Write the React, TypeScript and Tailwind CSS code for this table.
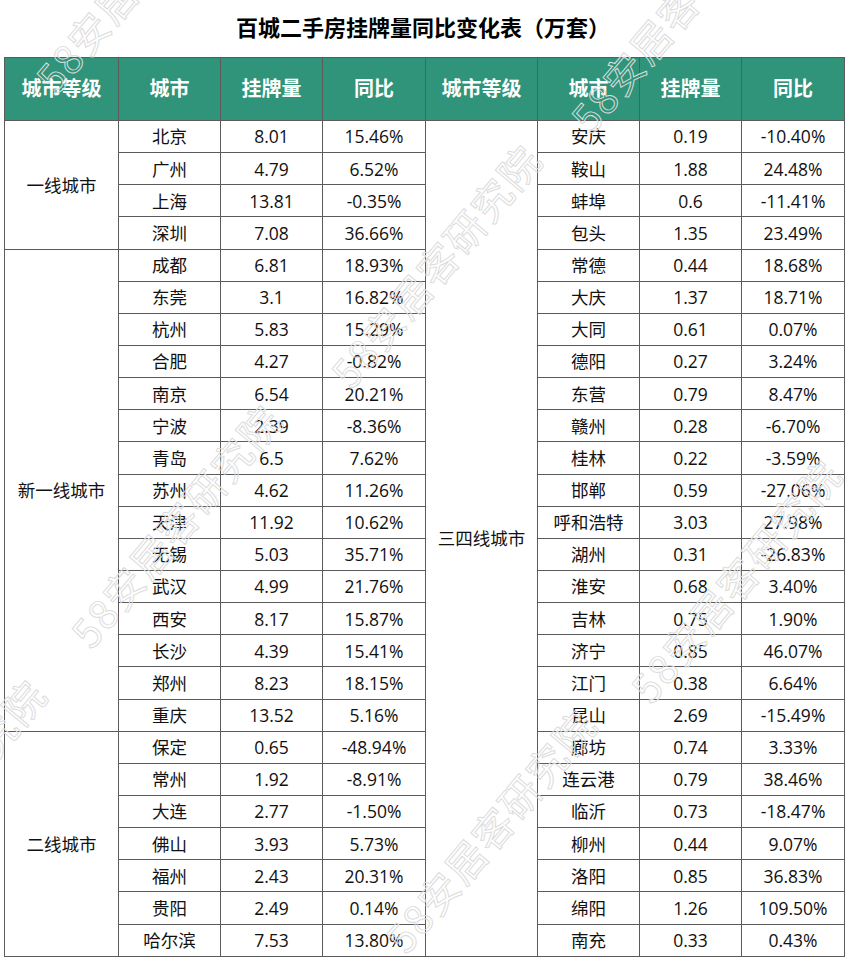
type Row = { city: string; count: string; yoy: string };

interface Group {
  tier: string;
  rows: Row[];
}

const leftGroups: Group[] = [
  {
    tier: "一线城市",
    rows: [
      { city: "北京", count: "8.01", yoy: "15.46%" },
      { city: "广州", count: "4.79", yoy: "6.52%" },
      { city: "上海", count: "13.81", yoy: "-0.35%" },
      { city: "深圳", count: "7.08", yoy: "36.66%" },
    ],
  },
  {
    tier: "新一线城市",
    rows: [
      { city: "成都", count: "6.81", yoy: "18.93%" },
      { city: "东莞", count: "3.1", yoy: "16.82%" },
      { city: "杭州", count: "5.83", yoy: "15.29%" },
      { city: "合肥", count: "4.27", yoy: "-0.82%" },
      { city: "南京", count: "6.54", yoy: "20.21%" },
      { city: "宁波", count: "2.39", yoy: "-8.36%" },
      { city: "青岛", count: "6.5", yoy: "7.62%" },
      { city: "苏州", count: "4.62", yoy: "11.26%" },
      { city: "天津", count: "11.92", yoy: "10.62%" },
      { city: "无锡", count: "5.03", yoy: "35.71%" },
      { city: "武汉", count: "4.99", yoy: "21.76%" },
      { city: "西安", count: "8.17", yoy: "15.87%" },
      { city: "长沙", count: "4.39", yoy: "15.41%" },
      { city: "郑州", count: "8.23", yoy: "18.15%" },
      { city: "重庆", count: "13.52", yoy: "5.16%" },
    ],
  },
  {
    tier: "二线城市",
    rows: [
      { city: "保定", count: "0.65", yoy: "-48.94%" },
      { city: "常州", count: "1.92", yoy: "-8.91%" },
      { city: "大连", count: "2.77", yoy: "-1.50%" },
      { city: "佛山", count: "3.93", yoy: "5.73%" },
      { city: "福州", count: "2.43", yoy: "20.31%" },
      { city: "贵阳", count: "2.49", yoy: "0.14%" },
      { city: "哈尔滨", count: "7.53", yoy: "13.80%" },
    ],
  },
];

const rightGroup: Group = {
  tier: "三四线城市",
  rows: [
    { city: "安庆", count: "0.19", yoy: "-10.40%" },
    { city: "鞍山", count: "1.88", yoy: "24.48%" },
    { city: "蚌埠", count: "0.6", yoy: "-11.41%" },
    { city: "包头", count: "1.35", yoy: "23.49%" },
    { city: "常德", count: "0.44", yoy: "18.68%" },
    { city: "大庆", count: "1.37", yoy: "18.71%" },
    { city: "大同", count: "0.61", yoy: "0.07%" },
    { city: "德阳", count: "0.27", yoy: "3.24%" },
    { city: "东营", count: "0.79", yoy: "8.47%" },
    { city: "赣州", count: "0.28", yoy: "-6.70%" },
    { city: "桂林", count: "0.22", yoy: "-3.59%" },
    { city: "邯郸", count: "0.59", yoy: "-27.06%" },
    { city: "呼和浩特", count: "3.03", yoy: "27.98%" },
    { city: "湖州", count: "0.31", yoy: "-26.83%" },
    { city: "淮安", count: "0.68", yoy: "3.40%" },
    { city: "吉林", count: "0.75", yoy: "1.90%" },
    { city: "济宁", count: "0.85", yoy: "46.07%" },
    { city: "江门", count: "0.38", yoy: "6.64%" },
    { city: "昆山", count: "2.69", yoy: "-15.49%" },
    { city: "廊坊", count: "0.74", yoy: "3.33%" },
    { city: "连云港", count: "0.79", yoy: "38.46%" },
    { city: "临沂", count: "0.73", yoy: "-18.47%" },
    { city: "柳州", count: "0.44", yoy: "9.07%" },
    { city: "洛阳", count: "0.85", yoy: "36.83%" },
    { city: "绵阳", count: "1.26", yoy: "109.50%" },
    { city: "南充", count: "0.33", yoy: "0.43%" },
  ],
};

// flatten left side so each row knows whether it opens a tier group
const leftRows = leftGroups.flatMap((g) =>
  g.rows.map((r, i) => ({ ...r, tier: i === 0 ? g.tier : null, span: g.rows.length }))
);

const headers = ["城市等级", "城市", "挂牌量", "同比", "城市等级", "城市", "挂牌量", "同比"];

// watermark spots: [left, top]
const marks: [number, number][] = [
  [-10, -60],
  [285, 235],
  [25, 495],
  [-210, 770],
  [585, 550],
  [525, -20],
  [340, 800],
];

const cell = "border border-[#5b5b5b] text-center p-0";

export default function App() {
  return (
    <div className="relative w-[855px] h-[967px] bg-white overflow-hidden font-['Open_Sans','Noto_Sans_CJK_SC',sans-serif] text-[#111]">
      <h1 className="pt-[12px] pb-[15px] pl-[2px] w-[844px] text-center text-[22px] leading-[30px] font-bold text-black">
        百城二手房挂牌量同比变化表（万套）
      </h1>

      <table className="ml-[4px] w-[840px] border-collapse table-fixed">
        <colgroup>
          <col className="w-[114px]" />
          <col className="w-[102px]" />
          <col className="w-[102px]" />
          <col className="w-[103px]" />
          <col className="w-[112px]" />
          <col className="w-[102px]" />
          <col className="w-[102px]" />
          <col className="w-[103px]" />
        </colgroup>
        <thead>
          <tr className="h-[63px] bg-[#2f9479]">
            {headers.map((h, i) => (
              <th key={i} className={`${cell} text-white text-[20px] font-bold`}>
                {h}
              </th>
            ))}
          </tr>
        </thead>
        <tbody className="text-[17.5px]">
          {leftRows.map((r, i) => {
            const rr = rightGroup.rows[i];
            return (
              <tr key={i} className="h-[32.15px]">
                {r.tier && (
                  <td rowSpan={r.span} className={cell}>
                    {r.tier}
                  </td>
                )}
                <td className={cell}>{r.city}</td>
                <td className={cell}>{r.count}</td>
                <td className={cell}>{r.yoy}</td>
                {i === 0 && (
                  <td rowSpan={rightGroup.rows.length} className={cell}>
                    {rightGroup.tier}
                  </td>
                )}
                <td className={cell}>{rr.city}</td>
                <td className={cell}>{rr.count}</td>
                <td className={cell}>{rr.yoy}</td>
              </tr>
            );
          })}
        </tbody>
      </table>

      {/* faint diagonal watermark */}
      {marks.map(([x, y], i) => (
        <div
          key={i}
          className="pointer-events-none absolute whitespace-nowrap text-[40px] tracking-[2px] text-transparent [-webkit-text-stroke:1px_#dcdcdc] origin-center -rotate-[50deg] font-['Noto_Sans_CJK_SC',sans-serif]"
          style={{ left: x, top: y }}
        >
          58安居客研究院
        </div>
      ))}
    </div>
  );
}
